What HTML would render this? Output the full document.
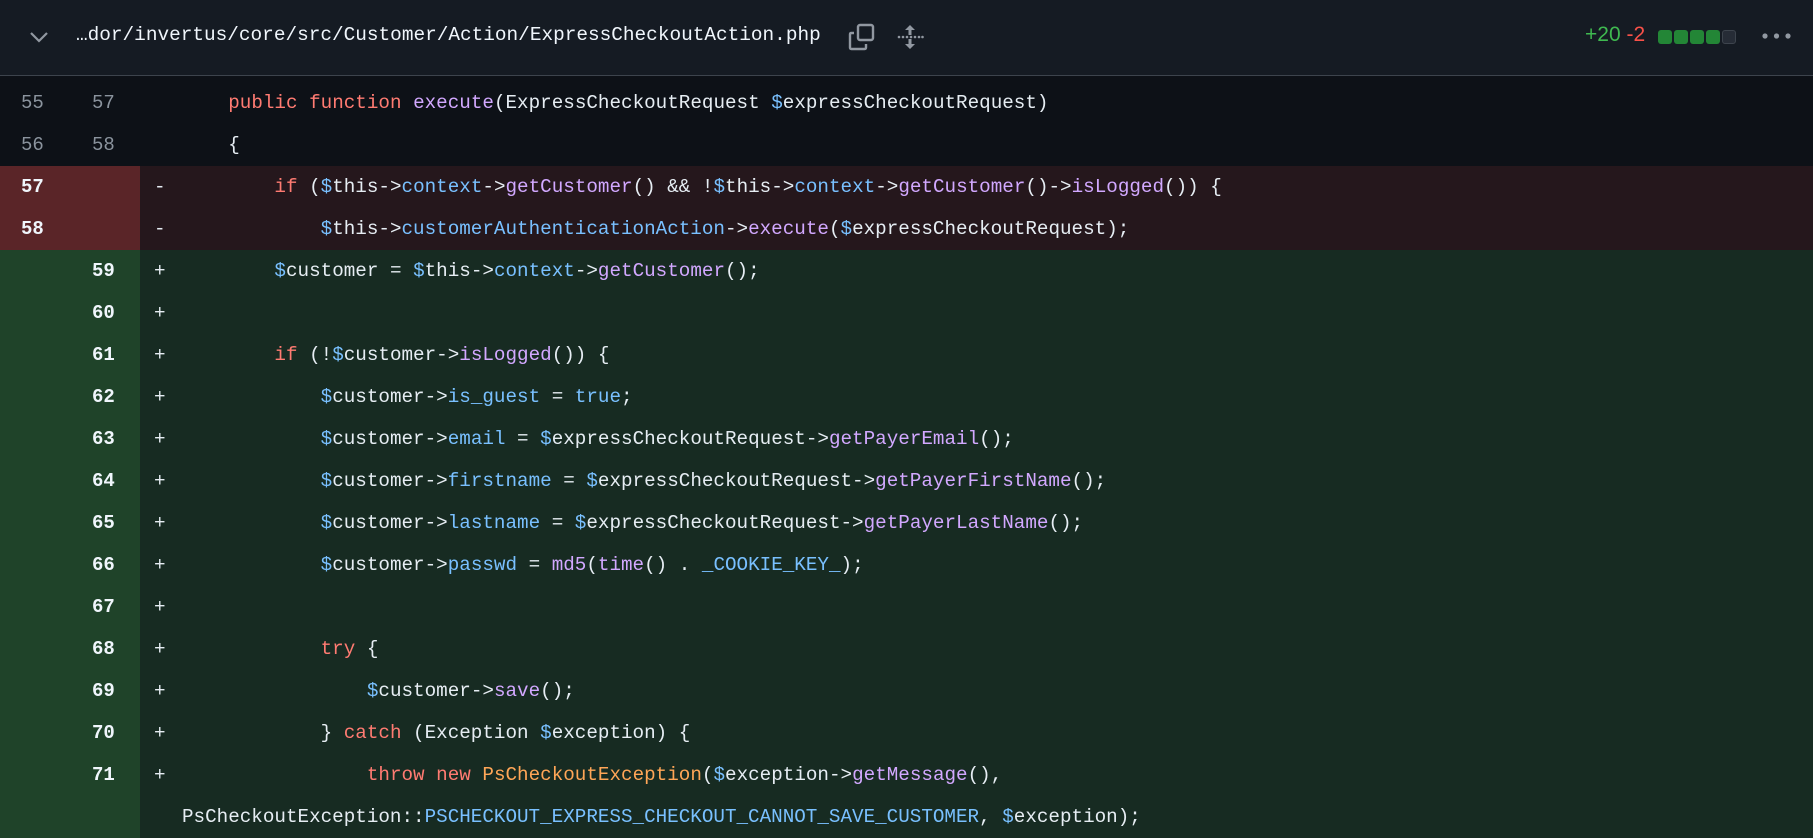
<!DOCTYPE html>
<html><head><meta charset="utf-8"><style>
*{margin:0;padding:0;box-sizing:border-box}
body{width:1813px;height:835px;overflow:hidden;background:#0d1117;font-family:"Liberation Mono",monospace;color:#e6edf3}
.hdr{position:absolute;left:0;top:0;width:1813px;height:76px;background:#151b23;border-bottom:1px solid #3d444d}
.fn{position:absolute;left:76px;top:24px;font-size:19.4px;color:#f0f6fc;white-space:pre}
.rows{position:absolute;left:0;top:82px;width:1813px}
.r{height:42px;position:relative;white-space:pre;font-size:19.25px;line-height:42px}
.g{position:absolute;left:0;top:0;width:140px;height:42px;font-size:19px;color:#8b949e}
.o{position:absolute;left:21px}.n{position:absolute;left:92px}
.s{position:absolute;left:154px}
.c{position:absolute;left:182px}
.del{background:#25171c}.del .g{background:#5a2528;color:#f0f6fc;font-weight:bold}
.add{background:#172b22}.add .g{background:#1f4329;color:#f0f6fc;font-weight:bold}
.k{color:#ff7b72}.f{color:#d2a8ff}.p{color:#79c0ff}.v{color:#79c0ff}.o2{color:#ffa657}
</style></head><body>
<div class="hdr">
<svg style="position:absolute;left:29px;top:30px" width="20" height="14" viewBox="0 0 20 14"><path d="M2 3l8 8 8-8" stroke="#9198a1" stroke-width="2.2" fill="none"/></svg>
<div class="fn">…dor/invertus/core/src/Customer/Action/ExpressCheckoutAction.php</div>
<svg style="position:absolute;left:847px;top:22px" width="30" height="30" viewBox="0 0 30 30" fill="none" stroke="#9198a1" stroke-width="2.4"><rect x="11" y="3" width="15" height="15" rx="2"/><path d="M7 11H4.5Q3 11 3 12.5V25.5Q3 27 4.5 27H17.5Q19 27 19 25.5V22"/></svg>
<svg style="position:absolute;left:896px;top:22px" width="28" height="30" viewBox="0 0 28 30" fill="#9198a1"><path d="M14 3l-5 5h3.5v5h3v-5H19z M14 27l-5-5h3.5v-5h3v5H19z"/><g><circle cx="3" cy="15" r="1.3"/><circle cx="7" cy="15" r="1.3"/><circle cx="11" cy="15" r="1.3"/><circle cx="15" cy="15" r="1.3"/><circle cx="19" cy="15" r="1.3"/><circle cx="23" cy="15" r="1.3"/><circle cx="26.5" cy="15" r="1.3"/></g></svg>
<div style="position:absolute;left:1585px;top:23px;font-family:'Liberation Sans',sans-serif;font-size:21px"><span style="color:#3fb950">+20</span> <span style="color:#f85149">-2</span></div>
<div style="position:absolute;left:1658px;top:30px;display:flex;gap:2px">
<i style="width:14px;height:14px;background:#238636;border-radius:3px"></i><i style="width:14px;height:14px;background:#238636;border-radius:3px"></i><i style="width:14px;height:14px;background:#238636;border-radius:3px"></i><i style="width:14px;height:14px;background:#238636;border-radius:3px"></i><i style="width:14px;height:14px;background:#262c36;border:1px solid #3d444d;border-radius:3px"></i></div>
<svg style="position:absolute;left:1761px;top:30px" width="32" height="12"><circle cx="4" cy="6" r="2.6" fill="#9198a1"/><circle cx="15.5" cy="6" r="2.6" fill="#9198a1"/><circle cx="27" cy="6" r="2.6" fill="#9198a1"/></svg>
</div>
<div class="rows">
<div class="r"><div class="g"><span class="o">55</span><span class="n">57</span></div><span class="c">    <span class="k">public</span> <span class="k">function</span> <span class="f">execute</span>(ExpressCheckoutRequest <span class="v">$</span>expressCheckoutRequest)</span></div>
<div class="r"><div class="g"><span class="o">56</span><span class="n">58</span></div><span class="c">    {</span></div>
<div class="r del"><div class="g"><span class="o">57</span></div><span class="s">-</span><span class="c">        <span class="k">if</span> (<span class="v">$</span>this-&gt;<span class="p">context</span>-&gt;<span class="f">getCustomer</span>() &amp;&amp; !<span class="v">$</span>this-&gt;<span class="p">context</span>-&gt;<span class="f">getCustomer</span>()-&gt;<span class="f">isLogged</span>()) {</span></div>
<div class="r del"><div class="g"><span class="o">58</span></div><span class="s">-</span><span class="c">            <span class="v">$</span>this-&gt;<span class="p">customerAuthenticationAction</span>-&gt;<span class="f">execute</span>(<span class="v">$</span>expressCheckoutRequest);</span></div>
<div class="r add"><div class="g"><span class="n">59</span></div><span class="s">+</span><span class="c">        <span class="v">$</span>customer = <span class="v">$</span>this-&gt;<span class="p">context</span>-&gt;<span class="f">getCustomer</span>();</span></div>
<div class="r add"><div class="g"><span class="n">60</span></div><span class="s">+</span></div>
<div class="r add"><div class="g"><span class="n">61</span></div><span class="s">+</span><span class="c">        <span class="k">if</span> (!<span class="v">$</span>customer-&gt;<span class="f">isLogged</span>()) {</span></div>
<div class="r add"><div class="g"><span class="n">62</span></div><span class="s">+</span><span class="c">            <span class="v">$</span>customer-&gt;<span class="p">is_guest</span> = <span class="p">true</span>;</span></div>
<div class="r add"><div class="g"><span class="n">63</span></div><span class="s">+</span><span class="c">            <span class="v">$</span>customer-&gt;<span class="p">email</span> = <span class="v">$</span>expressCheckoutRequest-&gt;<span class="f">getPayerEmail</span>();</span></div>
<div class="r add"><div class="g"><span class="n">64</span></div><span class="s">+</span><span class="c">            <span class="v">$</span>customer-&gt;<span class="p">firstname</span> = <span class="v">$</span>expressCheckoutRequest-&gt;<span class="f">getPayerFirstName</span>();</span></div>
<div class="r add"><div class="g"><span class="n">65</span></div><span class="s">+</span><span class="c">            <span class="v">$</span>customer-&gt;<span class="p">lastname</span> = <span class="v">$</span>expressCheckoutRequest-&gt;<span class="f">getPayerLastName</span>();</span></div>
<div class="r add"><div class="g"><span class="n">66</span></div><span class="s">+</span><span class="c">            <span class="v">$</span>customer-&gt;<span class="p">passwd</span> = <span class="f">md5</span>(<span class="f">time</span>() . <span class="p">_COOKIE_KEY_</span>);</span></div>
<div class="r add"><div class="g"><span class="n">67</span></div><span class="s">+</span></div>
<div class="r add"><div class="g"><span class="n">68</span></div><span class="s">+</span><span class="c">            <span class="k">try</span> {</span></div>
<div class="r add"><div class="g"><span class="n">69</span></div><span class="s">+</span><span class="c">                <span class="v">$</span>customer-&gt;<span class="f">save</span>();</span></div>
<div class="r add"><div class="g"><span class="n">70</span></div><span class="s">+</span><span class="c">            } <span class="k">catch</span> (Exception <span class="v">$</span>exception) {</span></div>
<div class="r add"><div class="g"><span class="n">71</span></div><span class="s">+</span><span class="c">                <span class="k">throw</span> <span class="k">new</span> <span class="o2">PsCheckoutException</span>(<span class="v">$</span>exception-&gt;<span class="f">getMessage</span>(),</span></div>
<div class="r add"><div class="g"></div><span class="c">PsCheckoutException::<span class="p">PSCHECKOUT_EXPRESS_CHECKOUT_CANNOT_SAVE_CUSTOMER</span>, <span class="v">$</span>exception);</span></div>
</div>
</body></html>
